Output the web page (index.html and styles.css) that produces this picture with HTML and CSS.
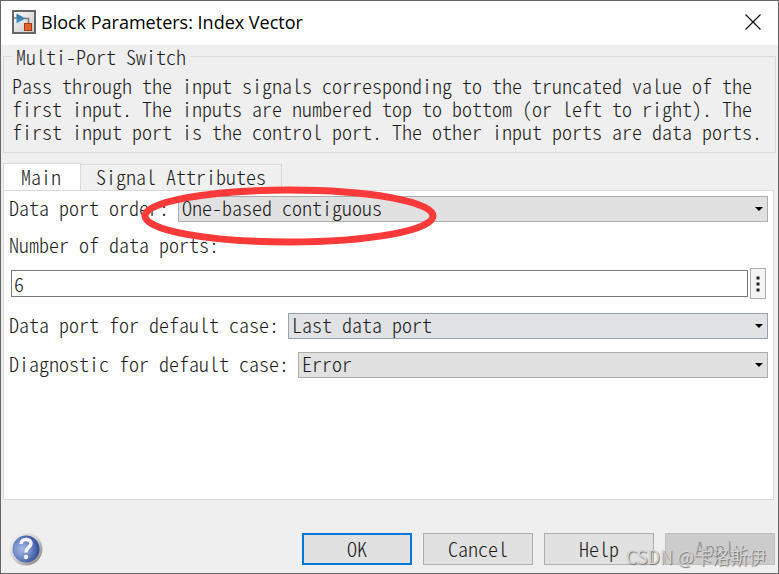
FILE: index.html
```html
<!DOCTYPE html>
<html lang="en">
<head>
<meta charset="utf-8">
<title>Block Parameters: Index Vector</title>
<link rel="stylesheet" href="styles.css">
</head>
<body>
<main class="dialog">
  <header class="titlebar">
    <svg class="app-icon" viewBox="0 0 24 24" aria-hidden="true">
      <defs>
        <linearGradient id="tile" x1="0" y1="0" x2="1" y2="1"><stop offset="0" stop-color="#fff"/><stop offset="1" stop-color="#c4c4c4"/></linearGradient>
        <linearGradient id="tri" x1="0" y1="0" x2="0" y2="1"><stop offset="0" stop-color="#2b6d9b"/><stop offset="1" stop-color="#45a0d2"/></linearGradient>
      </defs>
      <rect x="1" y="1" width="22" height="22" fill="url(#tile)" stroke="#666" stroke-width="2"/>
      <path d="M2 8H5M12 8.500H16.500V14" fill="none" stroke="#777" stroke-width="1.500"/>
      <path d="M4.500 3.500V13.500L13.500 8.500Z" fill="url(#tri)"/>
      <rect x="12.500" y="13.500" width="7" height="7" fill="#e8602c" stroke="#a83a12"/>
    </svg>
    <h1 class="title">Block Parameters: Index Vector</h1>
    <button class="close" type="button" aria-label="Close">
      <svg class="close-icon" viewBox="0 0 16 16" aria-hidden="true"><path d="M.5.5L15.500 15.500M15.500.5L.5 15.500" stroke="#111" stroke-width="1.200"/></svg>
    </button>
  </header>

  <fieldset class="about">
    <legend>Multi-Port Switch</legend>
    <p>Pass through the input signals corresponding to the truncated value of the<br>first input. The inputs are numbered top to bottom (or left to right). The<br>first input port is the control port. The other input ports are data ports.</p>
  </fieldset>

  <div class="tabs" role="tablist">
    <button class="tab tab-active" type="button" role="tab" aria-selected="true">Main</button>
    <button class="tab" type="button" role="tab" aria-selected="false">Signal Attributes</button>
  </div>

  <form class="panel" id="params">
    <div class="row">
      <label for="order">Data port order:</label>
      <div class="picker">
        <select id="order"><option>One-based contiguous</option></select>
      </div>
      <svg class="mark" viewBox="0 0 296 60" aria-hidden="true"><ellipse cx="148" cy="30" rx="144" ry="26" fill="none" stroke="#fc3a3a" stroke-width="7"/></svg>
    </div>
    <label class="ports-label" for="ports">Number of data ports:</label>
    <div class="ports">
      <input id="ports" type="text" value="6">
      <button class="more" type="button" aria-label="More options">
        <svg class="more-icon" viewBox="0 0 4 16" aria-hidden="true"><path d="M.5.5H3.500V3.500H.5ZM.5 6.500H3.500V9.500H.5ZM.5 12.500H3.500V15.500H.5Z" fill="#222"/></svg>
      </button>
    </div>
    <div class="row">
      <label for="default-port">Data port for default case:</label>
      <div class="picker picker-hover">
        <select id="default-port"><option>Last data port</option></select>
      </div>
    </div>
    <div class="row">
      <label for="diagnostic">Diagnostic for default case:</label>
      <div class="picker">
        <select id="diagnostic"><option>Error</option></select>
      </div>
    </div>
  </form>

  <footer class="actions">
    <button class="help" type="button" aria-label="About this block">
      <svg class="help-icon" viewBox="0 0 34 34" aria-hidden="true">
        <defs>
          <linearGradient id="rim" x1="0" y1="0" x2="1" y2="1"><stop offset="0" stop-color="#fafafa"/><stop offset=".5" stop-color="#d0d0d0"/><stop offset="1" stop-color="#777"/></linearGradient>
          <radialGradient id="ball" cx=".35" cy=".5" r=".7"><stop offset="0" stop-color="#a8b9e2"/><stop offset=".5" stop-color="#6c86c6"/><stop offset="1" stop-color="#233d8c"/></radialGradient>
        </defs>
        <circle cx="17" cy="17" r="16.500" fill="url(#rim)"/>
        <circle cx="17" cy="17" r="13.500" fill="url(#ball)"/>
        <path d="M12 12C12 6 22 6 22 11.500C22 15 17 15.500 17 20.500" fill="none" stroke="#f4f5fa" stroke-width="3.500"/>
        <circle cx="17" cy="25" r="2.200" fill="#f4f5fa"/>
      </svg>
    </button>
    <button class="action action-default" type="submit" form="params">OK</button>
    <button class="action" type="button">Cancel</button>
    <button class="action" type="button">Help</button>
    <button class="action" type="button" disabled>Apply</button>
    <span class="watermark">CSDN @卡洛斯伊</span>
  </footer>
</main>
</body>
</html>
```
FILE: styles.css
```css
* {
  box-sizing: border-box;
}

body {
  margin: 0;
  background: #666;
}

.dialog,
.dialog button,
.dialog input,
.dialog select {
  font-family: "Noto Sans CJK SC", "Liberation Mono", monospace;
  font-feature-settings: "hwid";
  font-variant-ligatures: none;
  font-weight: 300;
  font-size: 20px;
  line-height: 23px;
  color: #1a1a1a;
}

.dialog {
  display: flex;
  flex-direction: column;
  min-height: 100vh;
  border: 1px solid #666;
  background: #efefef;
}

.titlebar {
  display: flex;
  align-items: center;
  gap: 5px;
  height: 44px;
  padding: 0 17px 2px 11px;
  background: #fff;
}

.app-icon {
  width: 24px;
  height: 24px;
}

.title {
  flex: 1;
  margin: 0;
  font: 400 18px/24px "Open Sans", sans-serif;
  font-feature-settings: normal;
  color: #000;
}

.close,
.help {
  display: flex;
  padding: 0;
  border: 0;
  background: none;
}

.close-icon {
  width: 16px;
  height: 16px;
}

.about {
  margin: 0 2px;
  padding: 6px 8px 9px;
  border: 1px solid #d9d9d9;
}

.about legend {
  padding: 0 4px;
}

.about p {
  margin: 0;
  white-space: nowrap;
}

.tabs {
  display: flex;
  align-items: flex-end;
  margin: 10px 2px -1px;
}

.dialog .tab {
  height: 27px;
  padding: 0 15px 2px;
  border: 1px solid #d9d9d9;
  border-left: 0;
  background: #f0f0f0;
}

.dialog .tab-active {
  height: 28px;
  padding: 0 19px 3px 17px;
  border-bottom: 0;
  border-left: 1px solid #d9d9d9;
  background: #fff;
}

.panel {
  margin: 0 4px 0 2px;
  padding: 5px 5px 108px;
  border: 1px solid #d9d9d9;
  background: #fff;
}

.row {
  position: relative;
  display: flex;
  align-items: flex-start;
  gap: 9px;
  margin-bottom: 13px;
}

.picker {
  position: relative;
  display: flex;
  flex: 1;
  border: 1px solid #adadad;
  background: #e1e1e1;
}

.picker::after {
  content: "";
  position: absolute;
  top: 10px;
  right: 4px;
  border: 4px solid transparent;
  border-top-color: #000;
  border-bottom: 0;
}

.dialog .picker select {
  width: 100%;
  height: 30px;
  margin: -4px 0 -2px;
  padding: 0 3px;
  border: 0;
  background: none;
  line-height: 30px;
  appearance: none;
}

.picker-hover {
  border-color: #98a2ac;
  background: #e0e2e4;
}

.mark {
  position: absolute;
  top: -10px;
  left: 132px;
  width: 296px;
  height: 60px;
}

.ports-label {
  display: block;
  margin-top: -2px;
}

.ports {
  display: flex;
  align-items: center;
  gap: 2px;
  margin: 12px 2px 14px;
}

.ports input {
  flex: 1;
  min-width: 0;
  height: 27px;
  padding: 0 2px;
  border: 1px solid #7a7a7a;
  background: #fff;
}

.more {
  display: flex;
  align-items: center;
  justify-content: center;
  width: 16px;
  height: 31px;
  padding: 0;
  border: 1px solid #adadad;
  background: #f4f4f4;
}

.more-icon {
  width: 4px;
  height: 16px;
}

.actions {
  position: relative;
  display: flex;
  align-items: center;
  gap: 11px;
  margin-top: auto;
  padding: 0 3px 7px 8px;
}

.help {
  margin-right: auto;
}

.help-icon {
  width: 34px;
  height: 34px;
}

.dialog .action {
  width: 110px;
  height: 32px;
  padding: 0 0 2px;
  border: 1px solid #adadad;
  background: #e1e1e1;
}

.dialog .action-default {
  border: 2px solid #0078d7;
}

.dialog .action:disabled {
  border-color: #bfbfbf;
  background: #ccc;
  color: #8f8f8f;
}

.watermark {
  position: absolute;
  right: 12px;
  bottom: 3px;
  font: 18px/28px "Noto Sans CJK SC", sans-serif;
  font-feature-settings: normal;
  color: #d4d4d4;
  text-shadow: 1px 1px 1px #777;
  pointer-events: none;
}
```
